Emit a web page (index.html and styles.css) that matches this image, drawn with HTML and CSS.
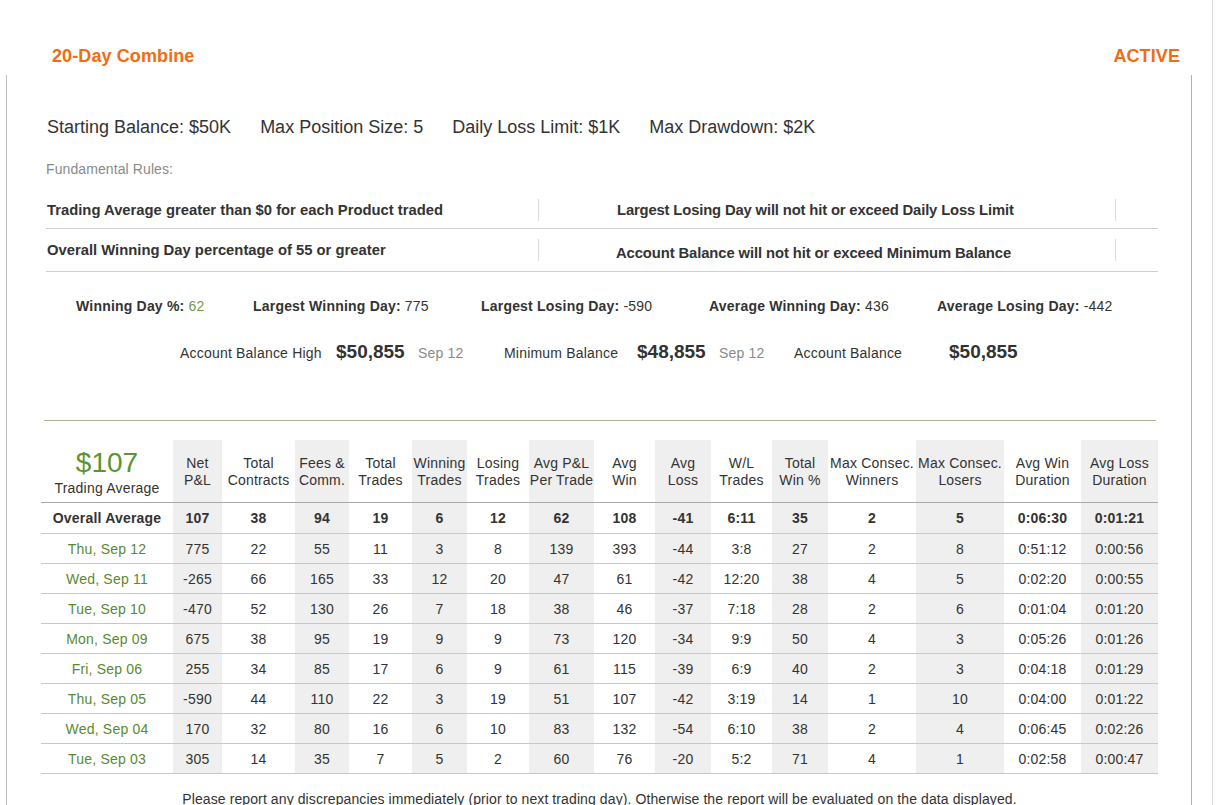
FILE: index.html
```html
<!DOCTYPE html>
<html>
<head>
<meta charset="utf-8">
<title>20-Day Combine</title>
<link rel="stylesheet" href="styles.css">
</head>
<body>
<div class="page">
  <div class="header">
    <span class="title">20-Day Combine</span>
    <span class="status">ACTIVE</span>
  </div>
  <div class="box">
    <div class="limits">
      <span>Starting Balance: $50K</span>
      <span>Max Position Size: 5</span>
      <span>Daily Loss Limit: $1K</span>
      <span>Max Drawdown: $2K</span>
    </div>
    <div class="rules-label">Fundamental Rules:</div>
    <div class="rules">
      <div class="rule-row r1">
        <div class="rule-text">Trading Average greater than $0 for each Product traded</div>
        <div class="sep"></div>
        <div></div>
        <div class="rule-text">Largest Losing Day will not hit or exceed Daily Loss Limit</div>
        <div class="sep"></div>
        <div></div>
      </div>
      <div class="rule-row r2">
        <div class="rule-text up">Overall Winning Day percentage of 55 or greater</div>
        <div class="sep"></div>
        <div></div>
        <div class="rule-text down">Account Balance will not hit or exceed Minimum Balance</div>
        <div class="sep"></div>
        <div></div>
      </div>
    </div>
    <div class="stats">
      <div><b>Winning Day %:</b> <span class="green-light">62</span></div>
      <div><b>Largest Winning Day:</b> 775</div>
      <div><b>Largest Losing Day:</b> -590</div>
      <div><b>Average Winning Day:</b> 436</div>
      <div><b>Average Losing Day:</b> -442</div>
    </div>
    <div class="balances">
      <span>Account Balance High</span>
      <span class="money">$50,855</span>
      <span class="date">Sep 12</span>
      <span>Minimum Balance</span>
      <span class="money">$48,855</span>
      <span class="date">Sep 12</span>
      <span>Account Balance</span>
      <span class="money">$50,855</span>
    </div>
    <div class="divider"></div>
    <table class="grid">
      <colgroup>
        <col style="width:132px"><col style="width:49px"><col style="width:73px"><col style="width:54px">
        <col style="width:63px"><col style="width:55px"><col style="width:62px"><col style="width:65px">
        <col style="width:61px"><col style="width:56px"><col style="width:61px"><col style="width:56px">
        <col style="width:88px"><col style="width:88px"><col style="width:77px"><col style="width:77px">
      </colgroup>
      <thead>
        <tr>
          <th class="avg-head"><div class="big">$107</div><div class="sub">Trading Average</div></th>
          <th>Net<br>P&amp;L</th>
          <th>Total<br>Contracts</th>
          <th>Fees &amp;<br>Comm.</th>
          <th>Total<br>Trades</th>
          <th>Winning<br>Trades</th>
          <th>Losing<br>Trades</th>
          <th>Avg P&amp;L<br>Per Trade</th>
          <th>Avg<br>Win</th>
          <th>Avg<br>Loss</th>
          <th>W/L<br>Trades</th>
          <th>Total<br>Win %</th>
          <th>Max Consec.<br>Winners</th>
          <th>Max Consec.<br>Losers</th>
          <th>Avg Win<br>Duration</th>
          <th>Avg Loss<br>Duration</th>
        </tr>
      </thead>
      <tbody>
        <tr class="overall"><td>Overall Average</td><td>107</td><td>38</td><td>94</td><td>19</td><td>6</td><td>12</td><td>62</td><td>108</td><td>-41</td><td>6:11</td><td>35</td><td>2</td><td>5</td><td>0:06:30</td><td>0:01:21</td></tr>
        <tr><td class="day">Thu, Sep 12</td><td>775</td><td>22</td><td>55</td><td>11</td><td>3</td><td>8</td><td>139</td><td>393</td><td>-44</td><td>3:8</td><td>27</td><td>2</td><td>8</td><td>0:51:12</td><td>0:00:56</td></tr>
        <tr><td class="day">Wed, Sep 11</td><td>-265</td><td>66</td><td>165</td><td>33</td><td>12</td><td>20</td><td>47</td><td>61</td><td>-42</td><td>12:20</td><td>38</td><td>4</td><td>5</td><td>0:02:20</td><td>0:00:55</td></tr>
        <tr><td class="day">Tue, Sep 10</td><td>-470</td><td>52</td><td>130</td><td>26</td><td>7</td><td>18</td><td>38</td><td>46</td><td>-37</td><td>7:18</td><td>28</td><td>2</td><td>6</td><td>0:01:04</td><td>0:01:20</td></tr>
        <tr><td class="day">Mon, Sep 09</td><td>675</td><td>38</td><td>95</td><td>19</td><td>9</td><td>9</td><td>73</td><td>120</td><td>-34</td><td>9:9</td><td>50</td><td>4</td><td>3</td><td>0:05:26</td><td>0:01:26</td></tr>
        <tr><td class="day">Fri, Sep 06</td><td>255</td><td>34</td><td>85</td><td>17</td><td>6</td><td>9</td><td>61</td><td>115</td><td>-39</td><td>6:9</td><td>40</td><td>2</td><td>3</td><td>0:04:18</td><td>0:01:29</td></tr>
        <tr><td class="day">Thu, Sep 05</td><td>-590</td><td>44</td><td>110</td><td>22</td><td>3</td><td>19</td><td>51</td><td>107</td><td>-42</td><td>3:19</td><td>14</td><td>1</td><td>10</td><td>0:04:00</td><td>0:01:22</td></tr>
        <tr><td class="day">Wed, Sep 04</td><td>170</td><td>32</td><td>80</td><td>16</td><td>6</td><td>10</td><td>83</td><td>132</td><td>-54</td><td>6:10</td><td>38</td><td>2</td><td>4</td><td>0:06:45</td><td>0:02:26</td></tr>
        <tr><td class="day">Tue, Sep 03</td><td>305</td><td>14</td><td>35</td><td>7</td><td>5</td><td>2</td><td>60</td><td>76</td><td>-20</td><td>5:2</td><td>71</td><td>4</td><td>1</td><td>0:02:58</td><td>0:00:47</td></tr>
      </tbody>
    </table>
    <p class="note">Please report any discrepancies immediately (prior to next trading day). Otherwise the report will be evaluated on the data displayed.</p>
  </div>
</div>
</body>
</html>
```

FILE: styles.css
```css
html, body {
  margin: 0;
  padding: 0;
  background: #ffffff;
}
body {
  font-family: "Liberation Sans", Arial, sans-serif;
  font-size: 14px;
  letter-spacing: 0.2px;
  color: #333333;
  overflow: hidden;
}
.page {
  width: 1213px;
  min-height: 805px;
  border-right: 1px solid #dedede;
  box-sizing: border-box;
}
.header {
  display: flex;
  justify-content: space-between;
  align-items: center;
  padding: 46px 32px 0 52px;
  height: 21px;
  line-height: 21px;
}
.title, .status {
  color: #f26c12;
  font-weight: bold;
  font-size: 18px;
  letter-spacing: 0.1px;
}
.box {
  margin: 8px 0 0 6px;
  width: 1186px;
  box-sizing: border-box;
  border-left: 1px solid #c0c0c0;
  border-right: 1px solid #b0b0b0;
  padding: 42px 33px 0 39px;
  min-height: 730px;
}
.limits {
  display: flex;
  gap: 29px;
  font-size: 18px;
  line-height: 21px;
  letter-spacing: 0;
  padding-left: 1px;
}
.rules-label {
  margin-top: 23px;
  color: #8a8a8a;
  line-height: 16px;
  letter-spacing: 0.1px;
}
.rules {
  margin-top: 14px;
}
.rule-row {
  display: grid;
  grid-template-columns: 492px 1px 77px 499px 1px 42px;
  align-items: center;
  border-bottom: 1px solid #cfcfcf;
  font-weight: bold;
  font-size: 14.8px;
  letter-spacing: 0;
}
.rule-row.r1 { height: 37px; }
.rule-row.r2 { height: 42px; }
.rule-text { padding-left: 1px; }
.rule-text.up { padding-bottom: 0; }
.rule-text.down { padding-top: 5px; padding-left: 0; letter-spacing: -0.1px; }
.rule-row.r1 .rule-text:nth-child(4) { letter-spacing: -0.15px; }
.sep {
  width: 1px;
  height: 22px;
  background: #dcdcdc;
}
.stats {
  display: grid;
  grid-template-columns: 177px 228px 228px 228px 228px;
  padding-left: 30px;
  margin-top: 26px;
  line-height: 16px;
}
.green-light { color: #6f9c4c; }
.balances {
  display: grid;
  grid-template-columns: 156px 82px 86px 133px 82px 75px 155px 90px;
  align-items: baseline;
  padding-left: 134px;
  margin-top: 27px;
  line-height: 22px;
}
.money {
  font-weight: bold;
  font-size: 19px;
  letter-spacing: 0;
  color: #333333;
}
.date { color: #8a8a8a; }
.divider {
  margin: 56px 2px 0 -2px;
  height: 1px;
  background: #a9b58f;
}
.grid {
  margin: 19px 0 0 -5px;
  width: 1117px;
  table-layout: fixed;
  border-collapse: separate;
  border-spacing: 0;
}
.grid th, .grid td {
  box-sizing: border-box;
  padding: 0;
  text-align: center;
  white-space: nowrap;
  vertical-align: middle;
}
.grid th {
  height: 63px;
  padding-top: 2px;
  font-weight: normal;
  line-height: 17px;
  border-bottom: 1px solid #a8a8a8;
}
.grid th.avg-head {
  padding-top: 2px;
}
.grid th:nth-child(even), .grid td:nth-child(even) {
  background: #efefef;
}
.avg-head .big {
  font-size: 28px;
  line-height: 30px;
  letter-spacing: 0;
  color: #5c9430;
}
.avg-head .sub {
  margin-top: 2px;
}
.grid td {
  height: 30px;
  border-bottom: 1px solid #c8c8c8;
}
.grid tr.overall td {
  height: 31px;
  font-weight: bold;
}
.grid td.day { color: #5a8a2f; }
.note {
  margin: 17px 0 0 -5px;
  width: 1117px;
  text-align: center;
  line-height: 16px;
  letter-spacing: 0.1px;
}
```
